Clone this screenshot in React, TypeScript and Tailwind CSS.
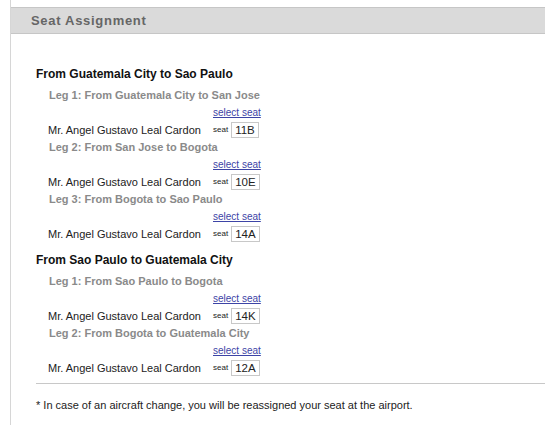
import React from "react";

type Leg = { title: string; seat: string };
type Section = { title: string; legs: Leg[] };

const sections: Section[] = [
  {
    title: "From Guatemala City to Sao Paulo",
    legs: [
      { title: "Leg 1: From Guatemala City to San Jose", seat: "11B" },
      { title: "Leg 2: From San Jose to Bogota", seat: "10E" },
      { title: "Leg 3: From Bogota to Sao Paulo", seat: "14A" },
    ],
  },
  {
    title: "From Sao Paulo to Guatemala City",
    legs: [
      { title: "Leg 1: From Sao Paulo to Bogota", seat: "14K" },
      { title: "Leg 2: From Bogota to Guatemala City", seat: "12A" },
    ],
  },
];

export default function App() {
  return (
    <div
      className="w-[545px] h-[425px] bg-white overflow-hidden pl-[10px]"
      style={{ fontFamily: '"Liberation Sans", Arial, sans-serif' }}
    >
      <div className="h-full border-l border-[#d6d6d6] pt-[7px]">
        <div className="h-[27px] bg-[#dadada] border-y border-[#c6c6c6] pl-[20px] flex items-center">
          <span className="text-[13px] font-bold text-[#666] tracking-[0.7px]">
            Seat Assignment
          </span>
        </div>
        <div className="pl-[25px] pt-[32px]">
          {sections.map((s, si) => (
            <div key={si} className={si > 0 ? "mt-[9px]" : ""}>
              <div className="h-[16px] leading-[16px] text-[12px] font-bold text-[#111] mb-[5px]">
                {s.title}
              </div>
              {s.legs.map((l, li) => (
                <div key={li}>
                  <div className="h-[17px] leading-[17px] pl-[13px] text-[11px] font-bold text-[#8a8a8a]">
                    {l.title}
                  </div>
                  <div className="h-[17px] leading-[17px] pl-[177px] text-[10px]">
                    <a href="#" className="text-[#3d44a6] underline">
                      select seat
                    </a>
                  </div>
                  <div className="h-[18px] flex items-center pl-[12px]">
                    <span className="w-[165px] text-[11px] text-[#222]">
                      Mr. Angel Gustavo Leal Cardon
                    </span>
                    <span className="text-[8px] text-[#222] mr-[3px]">seat</span>
                    <span className="h-[16px] px-[3px] border border-[#c8c8c8] text-[11.5px] leading-[14px] text-[#222] flex items-center">
                      {l.seat}
                    </span>
                  </div>
                </div>
              ))}
            </div>
          ))}
          <div className="mt-[6px] border-t border-[#c8c8c8]" />
          <div className="pt-[15px] text-[11px] leading-[13px] text-[#222]">
            * In case of an aircraft change, you will be reassigned your seat at the airport.
          </div>
        </div>
      </div>
    </div>
  );
}
